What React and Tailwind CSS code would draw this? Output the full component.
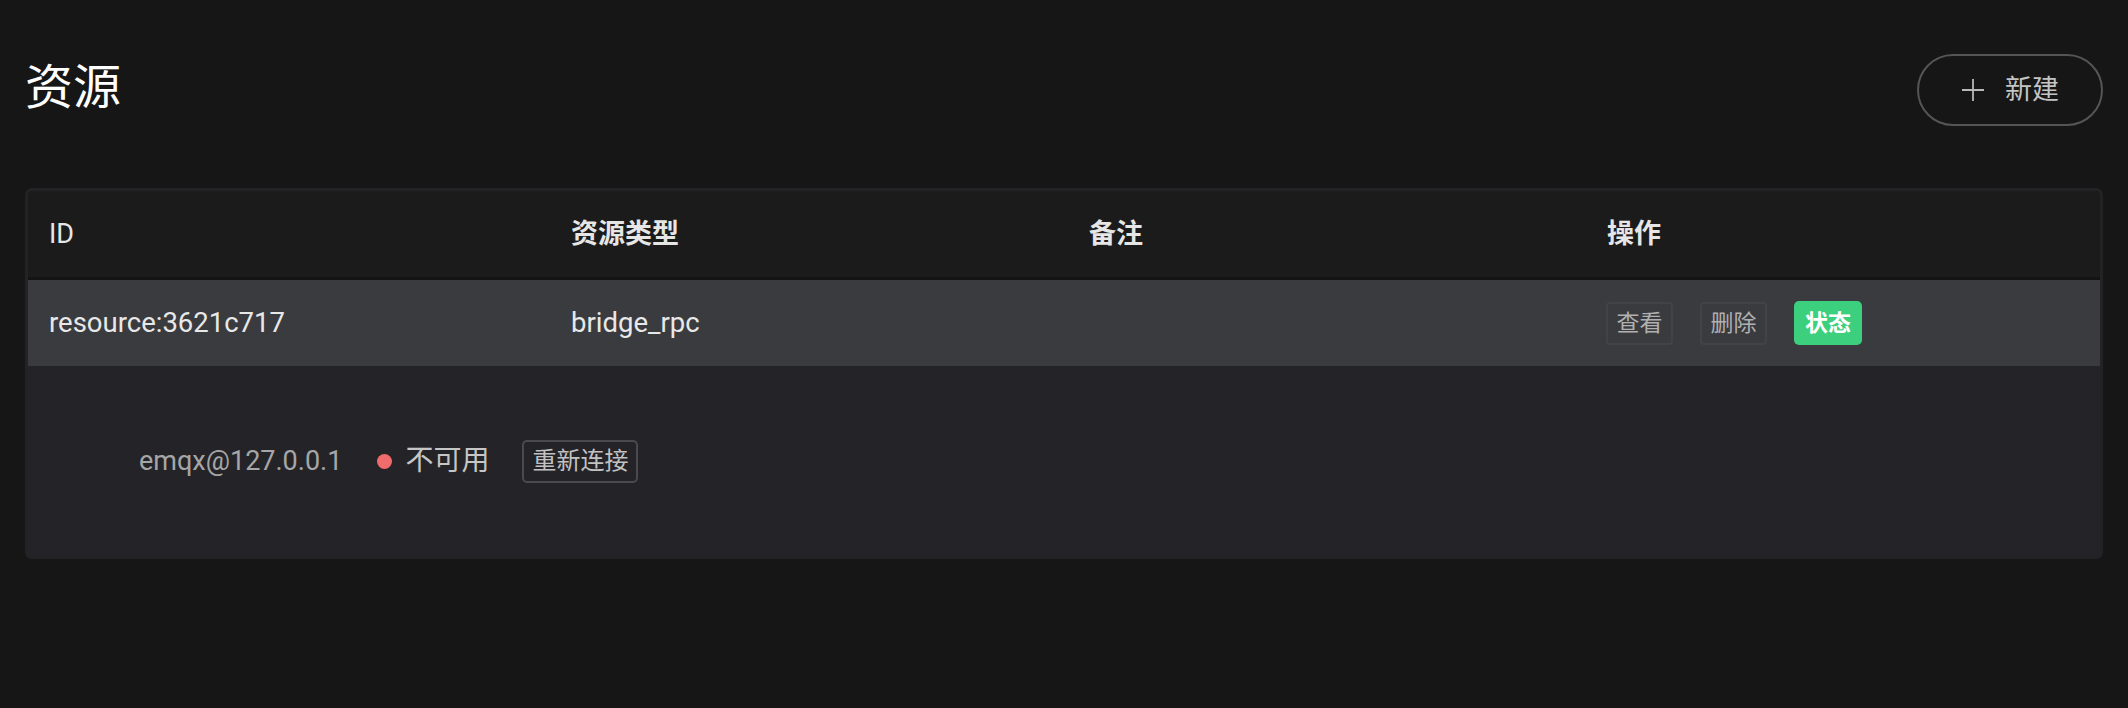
import React from "react";

const font = { fontFamily: 'Roboto, "Noto Sans CJK SC", sans-serif' };

function PlusIcon() {
  return (
    <svg width="24" height="24" viewBox="0 0 24 24" fill="none" stroke="#b8b8b8" strokeWidth="1.8">
      <path d="M12 1v22M1 12h22" />
    </svg>
  );
}

function SmallButton({ children }) {
  return (
    <button className="h-[43px] w-[67px] rounded-[4px] border-2 border-[#434347] text-[23px] leading-none text-[#b0b0b0]">
      {children}
    </button>
  );
}

export default function App() {
  return (
    <div className="min-h-[708px] w-full bg-[#161616] px-[25px] pt-[54px]" style={font}>
      {/* Header */}
      <div className="flex items-center justify-between">
        <h1 className="-mt-[4px] text-[48px] leading-none text-white">资源</h1>
        <button className="flex h-[72px] w-[186px] items-center justify-center gap-[20px] rounded-full border-2 border-[#555555] text-[27px] text-[#c4c4c4]">
          <PlusIcon />
          <span>新建</span>
        </button>
      </div>

      {/* Table card */}
      <div className="mt-[62px] overflow-hidden rounded-[7px] border-[3px] border-[#232325] bg-[#242428]">
        <div className="grid h-[89px] grid-cols-4 items-center border-b-[3px] border-[#141414] bg-[#1c1b1c] text-[27px] text-[#e6e6e6]">
          <div className="pl-[21px]">ID</div>
          <div className="pl-[25px] font-bold">资源类型</div>
          <div className="pl-[25px] font-bold">备注</div>
          <div className="pl-[25px] font-bold">操作</div>
        </div>

        <div className="grid h-[86px] grid-cols-4 items-center bg-[#3a3b3f] text-[27.5px] text-[#e8e8e8]">
          <div className="pl-[21px]">resource:3621c717</div>
          <div className="pl-[25px]">bridge_rpc</div>
          <div className="pl-[25px]"></div>
          <div className="flex items-center gap-[27px] pl-[24px]">
            <SmallButton>查看</SmallButton>
            <SmallButton>删除</SmallButton>
            <button className="h-[44px] w-[68px] rounded-[5px] bg-[#3ccf7d] text-[23px] font-bold leading-none text-white">
              状态
            </button>
          </div>
        </div>

        <div className="flex h-[190px] items-center pl-[111px]">
          <span className="text-[27px] text-[#a6a6a6]">emqx@127.0.0.1</span>
          <span className="ml-[35px] h-[15px] w-[15px] rounded-full bg-[#f06b6b]"></span>
          <span className="ml-[13px] text-[28px] text-[#c6c6c6]">不可用</span>
          <button className="ml-[33px] h-[43px] w-[116px] rounded-[5px] border-2 border-[#4a4a4e] text-[24px] leading-none text-[#c2c2c2]">
            重新连接
          </button>
        </div>
      </div>
    </div>
  );
}
